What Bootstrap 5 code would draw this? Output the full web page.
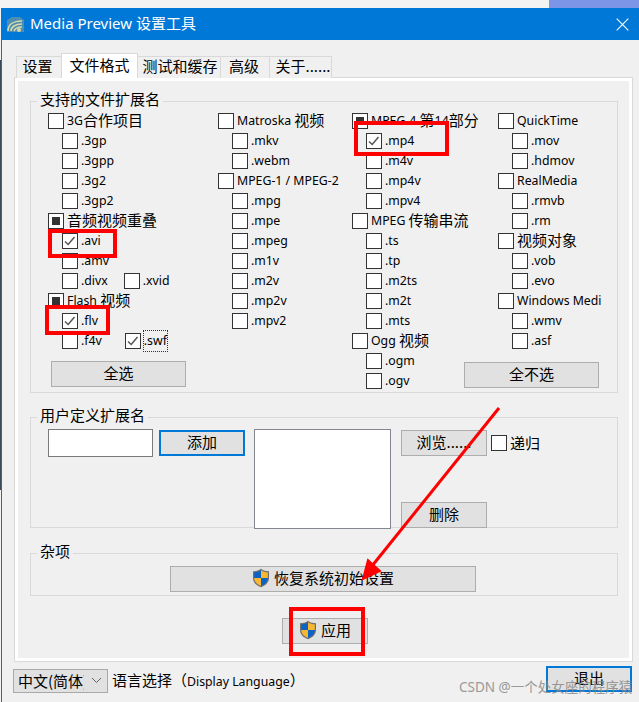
<!DOCTYPE html>
<html lang="zh">
<head>
<meta charset="utf-8">
<title>Media Preview 设置工具</title>
<link href="https://cdn.jsdelivr.net/npm/bootstrap@5.3.0/dist/css/bootstrap.min.css" rel="stylesheet">
<style>
html,body{margin:0;padding:0;height:702px;overflow:hidden}
body{background:linear-gradient(#f3f3f3 60px,#3c4a58 60px,#3c4a58 490px,#f3f3f3 490px);font-family:"Noto Sans","Noto Sans CJK SC",sans-serif;font-size:12.3px;color:#000;line-height:20px;position:relative}
.zh{font-family:"Noto Sans CJK SC",sans-serif;font-size:15px}
.it .zh{margin-bottom:2px}
.topstrip{height:8px;background:linear-gradient(90deg,#f3f3f3 549px,#7d95e6 549px)}
.win{height:694px;margin-left:1px;background:#f0f0f0;border-left:1px solid #0078d7}
.tbar{height:32px;background:#0078d7;color:#fff;font-size:15px;padding-left:5px}
.tbar .ttl{margin-left:6px;padding-bottom:2px;font-family:"Noto Sans","Noto Sans CJK SC",sans-serif}
.closex{margin-left:auto;margin-right:10px}
.tabrow{height:38px;padding:16px 0 0 14px}
.wtab{height:22px;padding-bottom:3px;border:1px solid #d9d9d9;border-bottom:0;border-left-width:0;background:#f0f0f0;display:flex;align-items:center;justify-content:center}
.wtab.first{border-left-width:1px;width:46px;padding-right:3px}
.wtab.on{background:#fff;width:77px;height:25px;margin-top:-3px;border-left-width:1px;margin-left:-1px;position:relative;z-index:2}
.wtab.t3{width:83px;padding-left:2px}
.wtab.t4{width:49px;padding-right:2px}
.wtab.t5{width:62px;padding-left:5px;white-space:nowrap}
.panel{width:619px;height:585px;margin-left:12px;margin-top:-1px;border:1px solid #d9d9d9;box-shadow:inset 0 0 0 3px #fff;padding:0 15px}
.gbox{border:1px solid #d9d9d9;margin:0;padding:0;min-width:0;position:relative;width:588px}
.gbox legend{float:none;width:auto;margin:0 0 0 6px;padding:0 3px;font-size:15px;line-height:16px;font-family:"Noto Sans CJK SC",sans-serif;position:relative;top:-2px}
.g1{height:300px;margin-top:15px}
.g2{height:119px;margin-top:16px}
.g3{height:51px;margin-top:17px}
.gcols{display:flex;padding:5px 0 0 17px;margin-top:-3px}
.c1{width:170px}.c2{width:134px}.c3{width:146px}.c4{width:80px;white-space:nowrap}
.it{display:flex;align-items:center;height:20px;white-space:nowrap}
.it.sub{padding-left:14px}
.cb{width:16px;height:16px;border:1px solid #333;background:#fff;flex:none;margin-right:3px;display:inline-flex;align-items:center;justify-content:center}
.cb.tri::before{content:"";width:8px;height:8px;background:#333}
.cb svg{display:block}
.lbl-x{margin-left:16px}
.lbl-y{margin-left:23px}
.focus{outline:1px dotted #333}
.wbtn{width:86px;height:26px;background:#e1e1e1;border:1px solid #adadad;padding:0 0 2px;border-radius:0;color:#000;display:flex;align-items:center;justify-content:center;flex:none;font-family:"Noto Sans CJK SC",sans-serif;font-size:15px;line-height:20px}
.wbtn.def{border:2px solid #0078d7}
.wide{width:135px}
.allb{margin:10px 0 0 3px}
.noneb{margin:11px 0 0 -34px}
.widest{width:306px;margin:5px 0 0 139px}
.tfield{width:105px;height:28px;background:#fff;border:1px solid #7a7a7a;flex:none}
.lbox{width:137px;height:100px;background:#fff;border:1px solid #828790;flex:none;margin-left:9px}
.g2row{display:flex;padding:0 0 0 17px;margin-top:4px}
.addb{margin:1px 0 0 6px}
.sidecol{display:flex;flex-direction:column;margin-left:10px}
.browse{margin-top:1px}
.delb{margin-top:46px}
.rec{margin-left:4px}
.applyrow{margin-top:22px;padding-left:252px}
.bottomrow{display:flex;align-items:flex-start}
.sel{width:95px;height:24px;margin:7px 0 0 11px;background:#e1e1e1;border:1px solid #a9a9a9;display:flex;align-items:center;overflow:hidden;flex:none;padding:0 0 1px 4px;font-family:"Noto Sans CJK SC",sans-serif;font-size:15px;white-space:nowrap}
.sel .txt{width:66px;overflow:hidden}
.sel svg{margin-left:7px}
.dl{margin:8px 0 0 4px;width:434px;flex:none}
.exitb{margin-top:4px}
.shot{position:absolute;pointer-events:none}
.redbox{border:4px solid #f00}
.wmark{left:459px;top:678px;color:#8a8a8a;font-size:13.5px;line-height:18px;opacity:.85;white-space:nowrap}
.defs{position:absolute}
.r1{left:354px;top:121px;width:95px;height:35px}
.r2{left:48px;top:229px;width:69px;height:29px}
.r3{left:45px;top:305px;width:65px;height:30px}
.r4{left:289px;top:607px;width:76px;height:49px}
.arrow{left:0;top:0}
</style>
</head>
<body>
<svg width="0" height="0" class="defs"><defs>
<symbol id="chk" viewBox="0 0 14 14"><path d="M2 7.5 5.2 10.5 11.5 3" fill="none" stroke="#555" stroke-width="1.5"/></symbol>
<symbol id="shield" viewBox="0 0 18 20"><path d="M9 .8C6.8 2.6 4.2 3.2 1 3.2V10c0 4.4 3.2 7.4 8 9.2 4.8-1.8 8-4.8 8-9.2V3.2C13.8 3.2 11.2 2.6 9 .8Z" fill="#6f6f6f"/><path d="M9 2.2C7 3.6 4.8 4.2 2.2 4.3V10H9Z" fill="#0b63c5"/><path d="M9 2.2C11 3.6 13.2 4.2 15.8 4.3V10H9Z" fill="#f7b731"/><path d="M2.2 10H9V17.9C5 16.3 2.3 13.7 2.2 10Z" fill="#f7b731"/><path d="M15.8 10H9V17.9C13 16.3 15.7 13.7 15.8 10Z" fill="#0b63c5"/></symbol>
</defs></svg>
<div class="topstrip"></div>
<div class="win">
  <div class="tbar d-flex align-items-center">
    <svg width="17" height="15" viewBox="0 0 17 15"><path d="M0 3 5 0H13L17 3V15H0Z" fill="#4d8fb3"/><path d="M1 14C1 8 6 4 15 4M4 14C4 10 8 7 15 7M7 14C8 11 11 10 15 10" fill="none" stroke="#d8d8a8" stroke-width="1.6"/><circle cx="12" cy="13" r="2" fill="#d8d8a8"/></svg>
    <span class="ttl">Media Preview 设置工具</span>
    <svg class="closex" width="13" height="13" viewBox="0 0 13 13"><path d="M.7.7 12.3 12.3M12.3.7.7 12.3" stroke="#fff" stroke-width="1.1"/></svg>
  </div>
  <div class="tabrow d-flex">
    <div class="wtab first zh">设置</div>
    <div class="wtab on zh">文件格式</div>
    <div class="wtab t3 zh">测试和缓存</div>
    <div class="wtab t4 zh">高级</div>
    <div class="wtab t5 zh">关于......</div>
  </div>
  <div class="panel">
    <fieldset class="gbox g1">
      <legend>支持的文件扩展名</legend>
      <div class="gcols">
        <div class="c1">
          <div class="it"><span class="cb"></span><span>3G</span><span class="zh">合作项目</span></div>
          <div class="it sub"><span class="cb"></span>.3gp</div>
          <div class="it sub"><span class="cb"></span>.3gpp</div>
          <div class="it sub"><span class="cb"></span>.3g2</div>
          <div class="it sub"><span class="cb"></span>.3gp2</div>
          <div class="it"><span class="cb tri"></span><span class="zh">音频视频重叠</span></div>
          <div class="it sub"><span class="cb"><svg width="14" height="14"><use href="#chk"/></svg></span>.avi</div>
          <div class="it sub"><span class="cb"></span>.amv</div>
          <div class="it sub"><span class="cb"></span>.divx<span class="cb lbl-x"></span>.xvid</div>
          <div class="it"><span class="cb tri"></span>Flash&nbsp;<span class="zh">视频</span></div>
          <div class="it sub"><span class="cb"><svg width="14" height="14"><use href="#chk"/></svg></span>.flv</div>
          <div class="it sub"><span class="cb"></span>.f4v<span class="cb lbl-y"><svg width="14" height="14"><use href="#chk"/></svg></span><span class="focus">.swf</span></div>
          <button class="wbtn wide allb" type="button">全选</button>
        </div>
        <div class="c2">
          <div class="it"><span class="cb"></span>Matroska&nbsp;<span class="zh">视频</span></div>
          <div class="it sub"><span class="cb"></span>.mkv</div>
          <div class="it sub"><span class="cb"></span>.webm</div>
          <div class="it"><span class="cb"></span>MPEG-1 / MPEG-2</div>
          <div class="it sub"><span class="cb"></span>.mpg</div>
          <div class="it sub"><span class="cb"></span>.mpe</div>
          <div class="it sub"><span class="cb"></span>.mpeg</div>
          <div class="it sub"><span class="cb"></span>.m1v</div>
          <div class="it sub"><span class="cb"></span>.m2v</div>
          <div class="it sub"><span class="cb"></span>.mp2v</div>
          <div class="it sub"><span class="cb"></span>.mpv2</div>
        </div>
        <div class="c3">
          <div class="it"><span class="cb tri"></span>MPEG-4&nbsp;<span class="zh">第</span>14<span class="zh">部分</span></div>
          <div class="it sub"><span class="cb"><svg width="14" height="14"><use href="#chk"/></svg></span>.mp4</div>
          <div class="it sub"><span class="cb"></span>.m4v</div>
          <div class="it sub"><span class="cb"></span>.mp4v</div>
          <div class="it sub"><span class="cb"></span>.mpv4</div>
          <div class="it"><span class="cb"></span>MPEG&nbsp;<span class="zh">传输串流</span></div>
          <div class="it sub"><span class="cb"></span>.ts</div>
          <div class="it sub"><span class="cb"></span>.tp</div>
          <div class="it sub"><span class="cb"></span>.m2ts</div>
          <div class="it sub"><span class="cb"></span>.m2t</div>
          <div class="it sub"><span class="cb"></span>.mts</div>
          <div class="it"><span class="cb"></span>Ogg&nbsp;<span class="zh">视频</span></div>
          <div class="it sub"><span class="cb"></span>.ogm</div>
          <div class="it sub"><span class="cb"></span>.ogv</div>
        </div>
        <div class="c4">
          <div class="it"><span class="cb"></span>QuickTime</div>
          <div class="it sub"><span class="cb"></span>.mov</div>
          <div class="it sub"><span class="cb"></span>.hdmov</div>
          <div class="it"><span class="cb"></span>RealMedia</div>
          <div class="it sub"><span class="cb"></span>.rmvb</div>
          <div class="it sub"><span class="cb"></span>.rm</div>
          <div class="it"><span class="cb"></span><span class="zh">视频对象</span></div>
          <div class="it sub"><span class="cb"></span>.vob</div>
          <div class="it sub"><span class="cb"></span>.evo</div>
          <div class="it"><span class="cb"></span>Windows Medi</div>
          <div class="it sub"><span class="cb"></span>.wmv</div>
          <div class="it sub"><span class="cb"></span>.asf</div>
          <button class="wbtn wide noneb" type="button">全不选</button>
        </div>
      </div>
    </fieldset>
    <fieldset class="gbox g2">
      <legend>用户定义扩展名</legend>
      <div class="g2row">
        <div class="tfield"></div>
        <button class="wbtn def addb" type="button">添加</button>
        <div class="lbox"></div>
        <div class="sidecol">
          <div class="d-flex align-items-center browse"><button class="wbtn" type="button">浏览......</button><span class="cb rec"></span><span class="zh">递归</span></div>
          <button class="wbtn delb" type="button">删除</button>
        </div>
      </div>
    </fieldset>
    <fieldset class="gbox g3">
      <legend>杂项</legend>
      <button class="wbtn widest" type="button"><svg width="18" height="20" class="me-1"><use href="#shield"/></svg>恢复系统初始设置</button>
    </fieldset>
    <div class="d-flex applyrow"><button class="wbtn" type="button"><svg width="18" height="20" class="me-1"><use href="#shield"/></svg>应用</button></div>
  </div>
  <div class="bottomrow">
    <div class="sel"><span class="txt">中文(简体)</span><svg width="11" height="7" viewBox="0 0 11 7"><path d="M1 1 5.5 5.5 10 1" fill="none" stroke="#666" stroke-width="1"/></svg></div>
    <div class="dl"><span class="zh">语言选择（</span>Display Language<span class="zh">）</span></div>
    <button class="wbtn def exitb" type="button">退出</button>
  </div>
</div>
<div class="shot redbox r1"></div>
<div class="shot redbox r2"></div>
<div class="shot redbox r3"></div>
<div class="shot redbox r4"></div>
<svg class="shot arrow" width="639" height="702"><path d="M499 408 372 566" stroke="#f00" stroke-width="3" fill="none"/><path d="M363 579 368 560 380 571Z" fill="#f00" stroke="#f00" stroke-width="2"/></svg>
<div class="shot wmark">CSDN @一个处女座的程序猿</div>
<script src="https://cdn.jsdelivr.net/npm/bootstrap@5.3.0/dist/js/bootstrap.bundle.min.js"></script>
</body>
</html>
